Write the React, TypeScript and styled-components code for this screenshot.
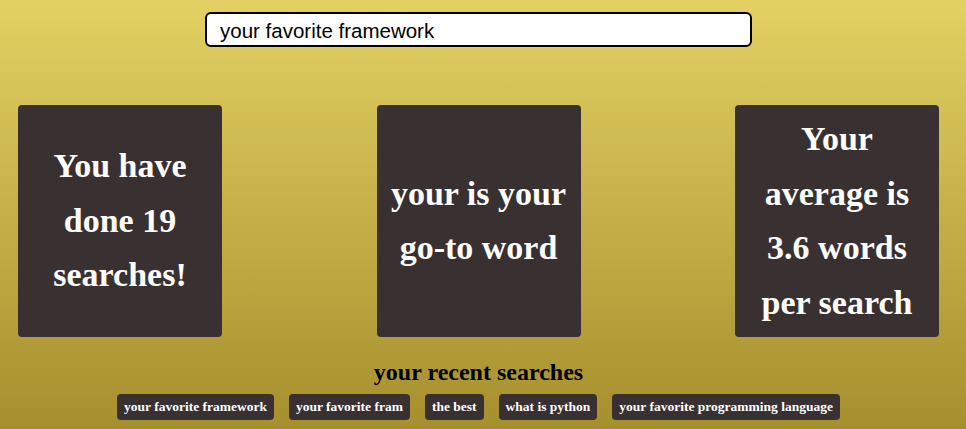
import React, { useEffect, useRef } from "react";
import styled, { createGlobalStyle } from "styled-components";

const Global = createGlobalStyle`
  html, body { margin: 0; padding: 0; }
  body {
    min-height: 429px;
    background: linear-gradient(180deg, #e3d163 0%, #a68f2d 100%);
    font-family: "Liberation Serif", "Times New Roman", serif;
  }
`;

const Page = styled.div`
  width: 957px;
  height: 429px;
  display: flex;
  flex-direction: column;
  align-items: center;
  box-sizing: border-box;
  padding-top: 12px;
`;

const SearchInput = styled.input`
  box-sizing: border-box;
  width: 547px;
  height: 35px;
  border: 2px solid #000;
  border-radius: 6px;
  padding: 2px 0 0 13px;
  font-family: "Liberation Sans", Arial, sans-serif;
  font-size: 20.5px;
  color: #000;
  background: #fff;
  outline: none;
`;

const CardRow = styled.div`
  width: 100%;
  box-sizing: border-box;
  padding: 0 18px;
  margin-top: 58px;
  display: flex;
  justify-content: space-between;
`;

const Card = styled.div`
  width: 204px;
  height: 232px;
  background: #393031;
  border-radius: 4px;
  display: flex;
  align-items: center;
  justify-content: center;
  text-align: center;
  color: #fff;
  font-weight: bold;
  font-size: 34px;
  line-height: 54.5px;
  padding: 0 10px;
  box-sizing: border-box;
`;

const Heading = styled.h2`
  margin: 22px 0 0;
  font-size: 24px;
  line-height: 26px;
  font-weight: bold;
  color: #000;
`;

const ChipRow = styled.div`
  display: flex;
  gap: 15px;
  margin-top: 9px;
`;

const Chip = styled.span`
  background: #393031;
  color: #fff;
  border-radius: 4px;
  height: 26px;
  display: flex;
  align-items: center;
  padding: 0 7px;
  font-size: 13.5px;
  font-weight: bold;
`;

const recent = [
  "your favorite framework",
  "your favorite fram",
  "the best",
  "what is python",
  "your favorite programming language",
];

export default function App() {
  const inputRef = useRef<HTMLInputElement>(null);
  useEffect(() => {
    const el = inputRef.current;
    if (el) {
      el.focus();
      const n = el.value.length;
      el.setSelectionRange(n, n);
    }
  }, []);
  return (
    <>
      <Global />
      <Page>
        <SearchInput ref={inputRef} defaultValue="your favorite framework" />
        <CardRow>
          <Card>You have done 19 searches!</Card>
          <Card>your is your go-to word</Card>
          <Card>Your average is 3.6 words per search</Card>
        </CardRow>
        <Heading>your recent searches</Heading>
        <ChipRow>
          {recent.map((r) => (
            <Chip key={r}>{r}</Chip>
          ))}
        </ChipRow>
      </Page>
    </>
  );
}
